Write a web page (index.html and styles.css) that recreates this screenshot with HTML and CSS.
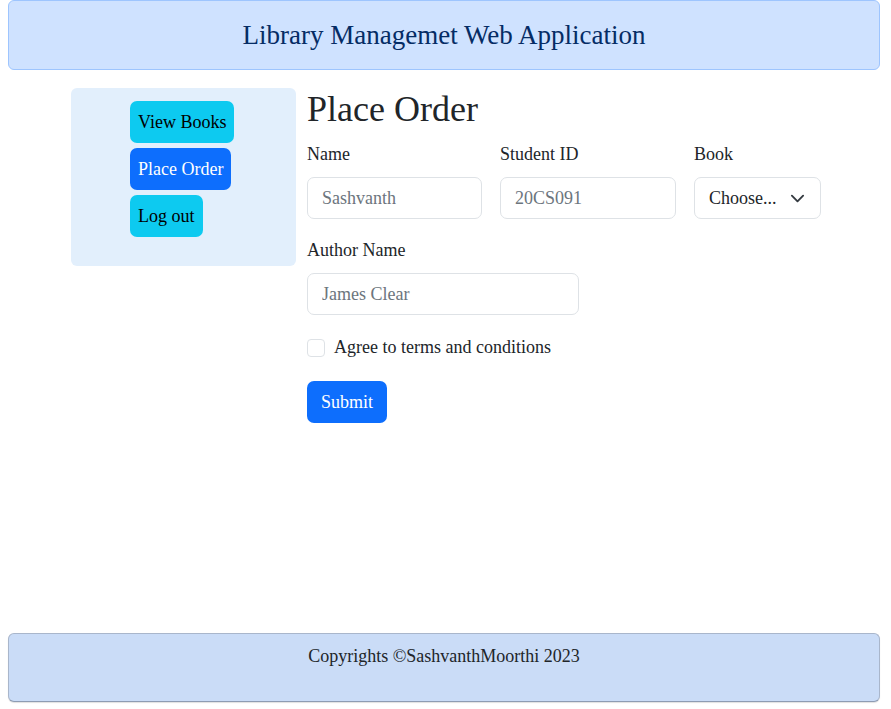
FILE: index.html
```html
<!DOCTYPE html>
<html lang="en">
<head>
<meta charset="utf-8">
<title>Library Management</title>
<link rel="stylesheet" href="styles.css">
</head>
<body>
<header class="app-header">
  <h3 class="app-title">Library Managemet Web Application</h3>
</header>
<div class="layout">
  <nav class="sidebar">
    <a class="btn btn-info" href="#">View Books</a>
    <a class="btn btn-primary" href="#">Place Order</a>
    <a class="btn btn-info" href="#">Log out</a>
  </nav>
  <main class="content">
    <h1 class="page-title">Place Order</h1>
    <form class="order-form">
      <div class="row">
        <div class="field w-name">
          <label class="form-label">Name</label>
          <input class="form-control" type="text" placeholder="Sashvanth">
        </div>
        <div class="field w-id">
          <label class="form-label">Student ID</label>
          <input class="form-control" type="text" placeholder="20CS091">
        </div>
        <div class="field w-book">
          <label class="form-label">Book</label>
          <div class="form-select">
            <span>Choose...</span>
            <svg class="chev" width="16" height="16" viewBox="0 0 16 16"><path d="M2 5l6 6 6-6" fill="none" stroke="#343a40" stroke-width="2" stroke-linecap="round" stroke-linejoin="round"/></svg>
          </div>
        </div>
      </div>
      <div class="field w-author">
        <label class="form-label">Author Name</label>
        <input class="form-control" type="text" placeholder="James Clear">
      </div>
      <div class="check">
        <span class="check-box"></span>
        <span class="check-label">Agree to terms and conditions</span>
      </div>
      <button class="btn btn-primary submit" type="button">Submit</button>
    </form>
  </main>
</div>
<footer class="app-footer">
  <p class="copy">Copyrights ©SashvanthMoorthi 2023</p>
</footer>
</body>
</html>
```
FILE: styles.css
```css
* { box-sizing: border-box; }
html, body { height: 100%; }
body {
  margin: 0;
  padding: 0 11px 7px 8px;
  font-family: "Liberation Serif", "Times New Roman", serif;
  font-size: 18px;
  line-height: 1.5;
  color: #212529;
  background: #fff;
  display: flex;
  flex-direction: column;
}
.app-header {
  height: 70px;
  background: #cfe2ff;
  border: 1px solid #9ec5fe;
  border-radius: 6px;
  display: flex;
  align-items: center;
  justify-content: center;
}
.app-title {
  margin: 0;
  font-size: 27px;
  font-weight: 400;
  line-height: 1.2;
  color: #052c65;
  padding-top: 1px;
}
.layout {
  flex: 1;
  display: flex;
  padding: 18px 0 0 63px;
  gap: 11px;
}
.sidebar {
  width: 225px;
  height: 178px;
  background: #e2effc;
  border-radius: 6px;
  padding: 13px 0 0 59px;
  display: flex;
  flex-direction: column;
  align-items: flex-start;
  gap: 5px;
}
.btn {
  display: inline-block;
  font-family: inherit;
  font-size: 18px;
  line-height: 27px;
  padding: 7.5px 8px;
  border: 0;
  border-radius: 7px;
  text-decoration: none;
  cursor: pointer;
}
.btn-info { background: #0dcaf0; color: #000; }
.btn-primary { background: #0d6efd; color: #fff; }
.content { flex: 1; }
.page-title {
  margin: 0 0 10px;
  font-size: 36px;
  font-weight: 400;
  line-height: 43px;
}
.row { display: flex; gap: 18px; }
.field { margin-bottom: 18px; }
.w-name { width: 175px; }
.w-id { width: 176px; }
.w-book { width: 127px; }
.w-author { width: 272px; margin-bottom: 19px; }
.form-label {
  display: block;
  margin-bottom: 9px;
  line-height: 27px;
}
.form-control, .form-select {
  display: block;
  width: 100%;
  height: 42px;
  padding: 6px 14px;
  font-family: inherit;
  font-size: 18px;
  line-height: 27px;
  color: #212529;
  background: #fff;
  border: 1px solid #dee2e6;
  border-radius: 7px;
}
.form-control::placeholder { color: #6c757d; }
.form-select {
  display: flex;
  align-items: center;
  justify-content: space-between;
  padding-right: 15px;
}
.chev { width: 15px; height: 15px; }
.check {
  display: flex;
  align-items: center;
  gap: 9px;
  margin-bottom: 20px;
  line-height: 27px;
}
.check-box {
  width: 18px;
  height: 18px;
  border: 1px solid #dee2e6;
  border-radius: 4px;
  background: #fff;
}
.submit { padding: 7.5px 14px; }
.app-footer {
  height: 69px;
  background: #cadcf7;
  border: 1px solid #a9b6cb;
  border-bottom-color: #8e9cb3;
  border-radius: 6px;
  box-shadow: 0 1px 1px rgba(0,0,0,.12);
  text-align: center;
  padding-top: 9px;
}
.copy { margin: 0; line-height: 27px; }
```
